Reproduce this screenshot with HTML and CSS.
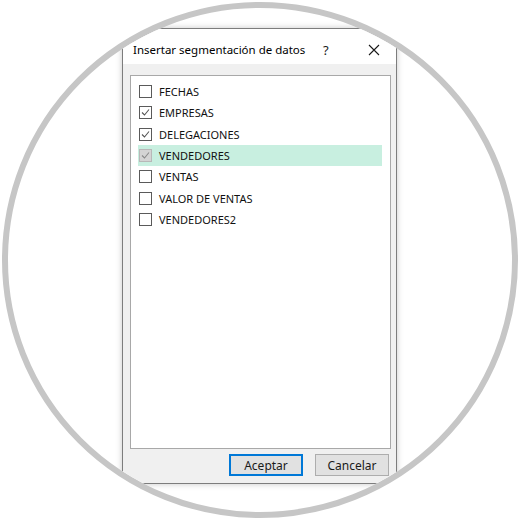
FILE: index.html
```html
<!DOCTYPE html>
<html lang="es">
<head>
<meta charset="utf-8">
<title>Insertar segmentación de datos</title>
<link rel="stylesheet" href="styles.css">
</head>
<body>
<div class="circle">
  <div class="dialog">
    <div class="titlebar">
      <span class="title">Insertar segmentación de datos</span>
      <span class="help">?</span>
      <span class="close">
        <svg width="12" height="12" viewBox="0 0 12 12"><path d="M1 1 L11 11 M11 1 L1 11" stroke="#1a1a1a" stroke-width="1.1" fill="none"/></svg>
      </span>
    </div>
    <div class="body">
      <div class="listbox">
        <div class="row"><span class="cb"></span><span class="lbl">FECHAS</span></div>
        <div class="row"><span class="cb checked"><svg width="11" height="11" viewBox="0 0 11 11"><path d="M2 5.5 L4.5 8 L9 2.5" stroke="#555" stroke-width="1.1" fill="none"/></svg></span><span class="lbl">EMPRESAS</span></div>
        <div class="row"><span class="cb checked"><svg width="11" height="11" viewBox="0 0 11 11"><path d="M2 5.5 L4.5 8 L9 2.5" stroke="#555" stroke-width="1.1" fill="none"/></svg></span><span class="lbl">DELEGACIONES</span></div>
        <div class="row selected"><span class="cb disabled"><svg width="11" height="11" viewBox="0 0 11 11"><path d="M2 5.5 L4.5 8 L9 2.5" stroke="#8a8a8a" stroke-width="1.1" fill="none"/></svg></span><span class="lbl">VENDEDORES</span></div>
        <div class="row"><span class="cb"></span><span class="lbl">VENTAS</span></div>
        <div class="row"><span class="cb"></span><span class="lbl">VALOR DE VENTAS</span></div>
        <div class="row"><span class="cb"></span><span class="lbl">VENDEDORES2</span></div>
      </div>
      <div class="buttons">
        <button class="btn primary">Aceptar</button>
        <button class="btn">Cancelar</button>
      </div>
    </div>
  </div>
</div>
</body>
</html>
```
FILE: styles.css
```css
html, body {
  margin: 0;
  padding: 0;
  background: #ffffff;
}
body {
  width: 520px;
  height: 520px;
  overflow: hidden;
  font-family: "Noto Sans", "Open Sans", sans-serif;
}
.circle {
  box-sizing: border-box;
  width: 516px;
  height: 516px;
  margin: 2px;
  border: 6px solid #c6c6c6;
  border-radius: 50%;
  overflow: hidden;
  background: #ffffff;
  padding-top: 20px;
  padding-left: 114px;
}
.dialog {
  box-sizing: border-box;
  width: 275px;
  height: 456px;
  border: 1px solid #7d7d7d;
  background: #f0f0f0;
  box-shadow: 0 0 6px rgba(0, 0, 0, 0.22);
  display: flex;
  flex-direction: column;
}
.titlebar {
  height: 35px;
  background: #ffffff;
  display: flex;
  align-items: center;
  padding-left: 10px;
  padding-top: 6px;
  box-sizing: border-box;
}
.title {
  font-size: 11.5px;
  color: #000;
  flex: 1;
}
.help {
  font-size: 13px;
  color: #1a1a1a;
  width: 12px;
  margin-right: 33px;
}
.close {
  width: 12px;
  height: 12px;
  margin-right: 16px;
  display: flex;
}
.body {
  flex: 1;
  padding: 11px 5px 0 7px;
  display: flex;
  flex-direction: column;
}
.listbox {
  box-sizing: border-box;
  height: 374px;
  background: #ffffff;
  border: 1px solid #a8a8a8;
  padding: 5px 8px 0 7px;
}
.row {
  height: 21.3px;
  display: flex;
  align-items: center;
  padding-left: 1px;
}
.row.selected {
  background: #c8efe0;
}
.cb {
  box-sizing: border-box;
  width: 13px;
  height: 13px;
  border: 1px solid #5a5a5a;
  background: #fff;
  display: flex;
  align-items: center;
  justify-content: center;
  flex: none;
}
.cb svg {
  display: block;
}
.cb.disabled {
  background: #d4d4d4;
  border-color: #b8b8b8;
}
.lbl {
  margin-left: 7px;
  font-size: 11px;
  color: #111;
}
.buttons {
  display: flex;
  justify-content: flex-end;
  gap: 12px;
  padding-top: 5px;
  padding-right: 2px;
}
.btn {
  box-sizing: border-box;
  width: 74px;
  height: 22px;
  background: #e1e1e1;
  border: 1px solid #adadad;
  font-family: "Noto Sans", "Open Sans", sans-serif;
  font-size: 12px;
  color: #1a1a1a;
  padding: 0;
  margin: 0;
}
.btn.primary {
  border: 2px solid #0078d7;
}
```
